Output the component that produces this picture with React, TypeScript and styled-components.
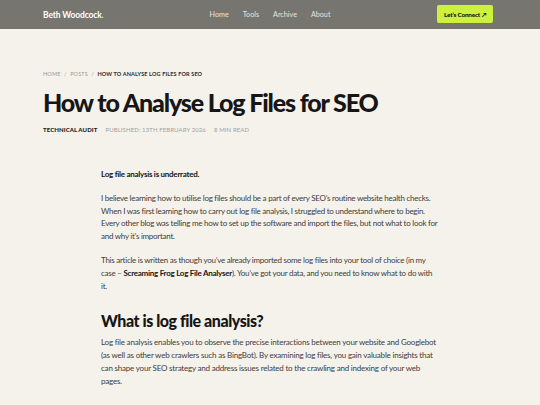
import styled, { createGlobalStyle } from "styled-components";

const GlobalStyle = createGlobalStyle`
  html, body {
    margin: 0;
    padding: 0;
    background: #f5f2ec;
  }
  body {
    font-family: "Lato", "Noto Sans", sans-serif;
    color: #2b2b2b;
  }
  * {
    box-sizing: border-box;
  }
`;

const navLinks = ["Home", "Tools", "Archive", "About"];

function App() {
  return (
    <>
      <GlobalStyle />
      <Header>
        <HeaderInner>
          <Logo>
            Beth Woodcock<span>.</span>
          </Logo>
          <Nav>
            {navLinks.map((link) => (
              <NavLink key={link} href="#">
                {link}
              </NavLink>
            ))}
          </Nav>
          <ConnectButton href="#">Let’s Connect ↗</ConnectButton>
        </HeaderInner>
      </Header>

      <Hero>
        <Breadcrumb>
          <Crumb>Home</Crumb>
          <Sep>/</Sep>
          <Crumb>Posts</Crumb>
          <Sep>/</Sep>
          <Crumb $current>How to Analyse Log Files for SEO</Crumb>
        </Breadcrumb>
        <Title>How to Analyse Log Files for SEO</Title>
        <Meta>
          <Category>Technical Audit</Category>
          <MetaItem>Published: 13th February 2026</MetaItem>
          <MetaItem>8 min read</MetaItem>
        </Meta>
      </Hero>

      <Article>
        <Lead>Log file analysis is underrated.</Lead>
        <Paragraph>
          I believe learning how to utilise log files should be a part of every
          SEO’s routine website health checks. When I was first learning how to
          carry out log file analysis, I struggled to understand where to begin.
          Every other blog was telling me how to set up the software and import
          the files, but not what to look for and why it’s important.
        </Paragraph>
        <Paragraph>
          This article is written as though you’ve already imported some log
          files into your tool of choice (in my case –{" "}
          <strong>Screaming Frog Log File Analyser</strong>). You’ve got your
          data, and you need to know what to do with it.
        </Paragraph>
        <SectionHeading>What is log file analysis?</SectionHeading>
        <Paragraph $spacing={-0.2}>
          Log file analysis enables you to observe the precise interactions
          between your website and Googlebot (as well as other web crawlers such
          as BingBot). By examining log files, you gain valuable insights that
          can shape your SEO strategy and address issues related to the crawling
          and indexing of your web pages.
        </Paragraph>
      </Article>
    </>
  );
}

const Header = styled.header`
  background: #777570;
  height: 29px;
`;

const HeaderInner = styled.div`
  width: 454px;
  height: 100%;
  margin: 0 auto;
  padding-right: 4px;
  display: grid;
  grid-template-columns: 1fr auto 1fr;
  align-items: center;
`;

const Logo = styled.div`
  color: #ffffff;
  font-weight: 700;
  font-size: 8.5px;
  letter-spacing: -0.15px;

  span {
    color: #cdf23e;
  }
`;

const Nav = styled.nav`
  display: flex;
  gap: 14px;
  margin-left: 4px;
`;

const NavLink = styled.a`
  color: #e6e4df;
  font-size: 7.2px;
  text-decoration: none;
`;

const ConnectButton = styled.a`
  justify-self: end;
  display: flex;
  align-items: center;
  justify-content: center;
  width: 56px;
  height: 18px;
  margin-top: -1px;
  background: #cdf23e;
  border-radius: 2px;
  color: #111;
  font-size: 6.3px;
  font-weight: 900;
  text-decoration: none;
  letter-spacing: -0.15px;
`;

const Hero = styled.section`
  width: 454px;
  margin: 0 auto;
  padding-top: 41px;
`;

const Breadcrumb = styled.div`
  display: flex;
  align-items: center;
  gap: 3.5px;
  font-size: 5.5px;
  letter-spacing: 0.15px;
  text-transform: uppercase;
  line-height: 8px;
`;

const Crumb = styled.span<{ $current?: boolean }>`
  color: ${(p) => (p.$current ? "#2a2a2a" : "#9a9893")};
  font-weight: ${(p) => (p.$current ? 700 : 400)};
`;

const Sep = styled.span`
  color: #a3a19c;
`;

const Title = styled.h1`
  margin: 9px 0 0;
  font-size: 25px;
  line-height: 31px;
  font-weight: 900;
  letter-spacing: -1.15px;
  color: #161616;
`;

const Meta = styled.div`
  display: flex;
  gap: 8px;
  margin-top: 8px;
  font-size: 6px;
  letter-spacing: 0.1px;
  line-height: 8px;
  text-transform: uppercase;
`;

const Category = styled.span`
  color: #1c1c1c;
  font-weight: 900;
`;

const MetaItem = styled.span`
  color: #a3a19c;
`;

const Article = styled.article`
  width: 338px;
  margin: 0 auto;
  padding-top: 34px;
  font-size: 8px;
  line-height: 12.8px;
  letter-spacing: -0.26px;
  color: #3d3c3a;
`;

const Lead = styled.p`
  margin: 0 0 11px;
  font-weight: 700;
  color: #151515;
`;

const Paragraph = styled.p<{ $spacing?: number }>`
  margin: 0 0 11px;
  letter-spacing: ${(p) => (p.$spacing ?? -0.26)}px;

  strong {
    font-weight: 700;
    color: #151515;
  }
`;

const SectionHeading = styled.h2`
  margin: 19px 0 5px;
  font-size: 16px;
  line-height: 20px;
  font-weight: 900;
  letter-spacing: -0.45px;
  color: #161616;
`;

export default App;
